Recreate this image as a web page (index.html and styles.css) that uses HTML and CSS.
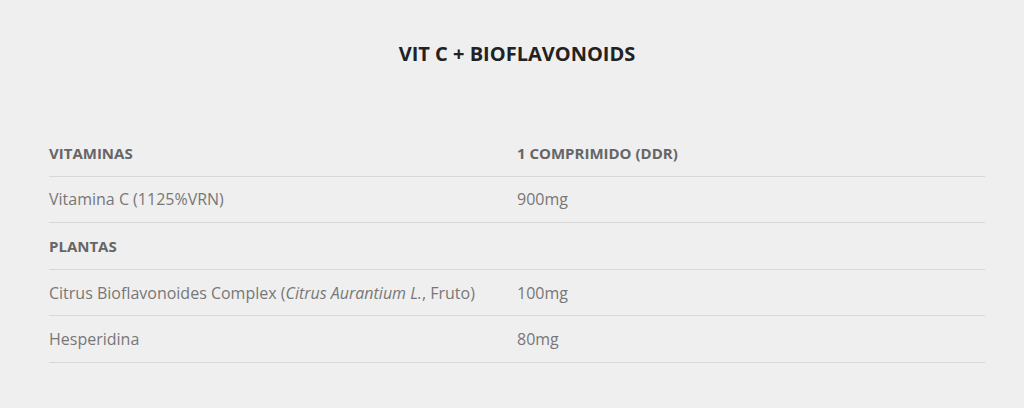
FILE: index.html
```html
<!DOCTYPE html>
<html lang="pt">
<head>
<meta charset="utf-8">
<link rel="stylesheet" href="styles.css">
</head>
<body>
<main class="page">
  <h2 class="title">VIT C + BIOFLAVONOIDS</h2>
  <table class="facts">
    <tr class="head">
      <th>VITAMINAS</th>
      <th>1 COMPRIMIDO (DDR)</th>
    </tr>
    <tr>
      <td>Vitamina C (1125%VRN)</td>
      <td>900mg</td>
    </tr>
    <tr class="head">
      <th>PLANTAS</th>
      <th></th>
    </tr>
    <tr>
      <td>Citrus Bioflavonoides Complex (<em>Citrus Aurantium L.</em>, Fruto)</td>
      <td>100mg</td>
    </tr>
    <tr>
      <td>Hesperidina</td>
      <td>80mg</td>
    </tr>
  </table>
</main>
</body>
</html>
```
FILE: styles.css
```css
html, body {
  margin: 0;
  padding: 0;
  background: #efefef;
}
body {
  font-family: "Open Sans", "Noto Sans", sans-serif;
  color: #777;
}
.page {
  padding: 39px 39px 0 49px;
}
.title {
  margin: 0 0 61px;
  text-align: center;
  font-size: 20px;
  font-weight: 700;
  color: #222;
  line-height: 30px;
}
.facts {
  width: 936px;
  border-collapse: collapse;
  table-layout: fixed;
  font-size: 16px;
}
.facts th,
.facts td {
  text-align: left;
  padding: 0;
  height: 45.6px;
  border-bottom: 1px solid #d8d8d8;
  vertical-align: middle;
  white-space: nowrap;
}
.facts th {
  font-size: 15px;
  font-weight: 700;
  color: #666;
}
```
